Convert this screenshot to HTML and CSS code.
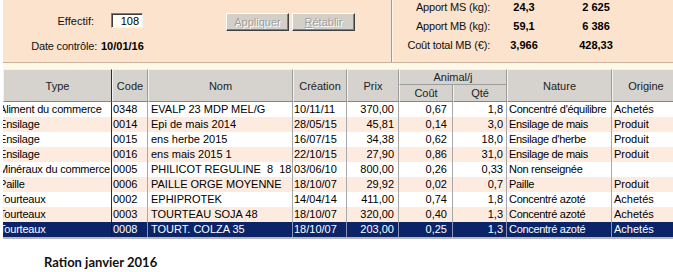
FILE: index.html
```html
<!DOCTYPE html>
<html lang="fr">
<head>
  <meta charset="UTF-8" />
  <title>Ration janvier 2016</title>
  <link rel="stylesheet" href="styles.css">
</head>
<body>

<div class="screen">
  <div class="panel">
    <div class="panel-left">
      <div class="field-row row-effectif">
        <label class="lbl lbl-eff" for="effectif">Effectif:</label>
        <input class="num-input" id="effectif" type="text" value="108" readonly />
        <button class="btn btn-first" disabled>Appliquer</button>
        <button class="btn" disabled><u>R</u>établir</button>
      </div>
      <div class="field-row row-date">
        <span class="lbl lbl-date">Date contrôle:</span>
        <strong>10/01/16</strong>
      </div>
    </div>
    <div class="panel-right">
      <div class="totals">
        <span class="t-lbl">Apport MS (kg):</span><b>24,3</b><b>2 625</b>
        <span class="t-lbl">Apport MB (kg):</span><b>59,1</b><b>6 386</b>
        <span class="t-lbl">Coût total MB (€):</span><b>3,966</b><b>428,33</b>
      </div>
    </div>
  </div>
  <div class="strip"></div>

  <div class="grid-wrap">
    <table class="grid">
      <colgroup>
        <col class="c-type"><col class="c-code"><col class="c-nom"><col class="c-crea">
        <col class="c-prix"><col class="c-cout"><col class="c-qte"><col class="c-nat"><col class="c-orig">
      </colgroup>
      <thead>
        <tr class="h1">
          <th rowspan="2" class="sep-dark">Type</th>
          <th rowspan="2">Code</th>
          <th rowspan="2">Nom</th>
          <th rowspan="2">Création</th>
          <th rowspan="2">Prix</th>
          <th colspan="2" class="group">Animal/j</th>
          <th rowspan="2">Nature</th>
          <th rowspan="2">Origine</th>
        </tr>
        <tr class="h2">
          <th>Coût</th>
          <th>Qté</th>
        </tr>
      </thead>
      <tbody>
        <tr>
          <td class="type sep-dark">Aliment du commerce</td><td class="code">0348</td><td class="nom">EVALP 23 MDP MEL/G</td><td class="crea">10/11/11</td>
          <td class="num prix">370,00</td><td class="num cout">0,67</td><td class="num qte">1,8</td><td class="nat">Concentré d'équilibre</td><td class="orig">Achetés</td>
        </tr>
        <tr>
          <td class="type sep-dark">Ensilage</td><td class="code">0014</td><td class="nom">Epi de mais 2014</td><td class="crea">28/05/15</td>
          <td class="num prix">45,81</td><td class="num cout">0,14</td><td class="num qte">3,0</td><td class="nat">Ensilage de mais</td><td class="orig">Produit</td>
        </tr>
        <tr>
          <td class="type sep-dark">Ensilage</td><td class="code">0015</td><td class="nom">ens herbe 2015</td><td class="crea">16/07/15</td>
          <td class="num prix">34,38</td><td class="num cout">0,62</td><td class="num qte">18,0</td><td class="nat">Ensilage d'herbe</td><td class="orig">Produit</td>
        </tr>
        <tr>
          <td class="type sep-dark">Ensilage</td><td class="code">0016</td><td class="nom">ens mais 2015 1</td><td class="crea">22/10/15</td>
          <td class="num prix">27,90</td><td class="num cout">0,86</td><td class="num qte">31,0</td><td class="nat">Ensilage de mais</td><td class="orig">Produit</td>
        </tr>
        <tr>
          <td class="type sep-dark">Minéraux du commerce</td><td class="code">0005</td><td class="nom">PHILICOT REGULINE  8  18  '</td><td class="crea">03/06/10</td>
          <td class="num prix">800,00</td><td class="num cout">0,26</td><td class="num qte">0,33</td><td class="nat">Non renseignée</td><td class="orig"></td>
        </tr>
        <tr>
          <td class="type sep-dark">Paille</td><td class="code">0006</td><td class="nom">PAILLE ORGE MOYENNE</td><td class="crea">18/10/07</td>
          <td class="num prix">29,92</td><td class="num cout">0,02</td><td class="num qte">0,7</td><td class="nat">Paille</td><td class="orig">Produit</td>
        </tr>
        <tr>
          <td class="type sep-dark">Tourteaux</td><td class="code">0002</td><td class="nom">EPHIPROTEK</td><td class="crea">14/04/14</td>
          <td class="num prix">411,00</td><td class="num cout">0,74</td><td class="num qte">1,8</td><td class="nat">Concentré azoté</td><td class="orig">Achetés</td>
        </tr>
        <tr>
          <td class="type sep-dark">Tourteaux</td><td class="code">0003</td><td class="nom">TOURTEAU SOJA 48</td><td class="crea">18/10/07</td>
          <td class="num prix">320,00</td><td class="num cout">0,40</td><td class="num qte">1,3</td><td class="nat">Concentré azoté</td><td class="orig">Achetés</td>
        </tr>
        <tr class="selected">
          <td class="type sep-dark">Tourteaux</td><td class="code">0008</td><td class="nom">TOURT. COLZA 35</td><td class="crea">18/10/07</td>
          <td class="num prix">203,00</td><td class="num cout">0,25</td><td class="num qte">1,3</td><td class="nat">Concentré azoté</td><td class="orig">Achetés</td>
        </tr>
      </tbody>
    </table>
  </div>

  <p class="caption">Ration janvier 2016</p>
</div>

</body>
</html>
```

FILE: styles.css
```css
* {
  box-sizing: border-box;
}

body {
  margin: 0;
  background: #ffffff;
  font-family: "Liberation Sans", Arial, sans-serif;
  font-size: 11px;
  color: #000;
}

.screen {
  padding-left: 3px;
}

/* top panel */
.panel {
  display: flex;
  height: 63px;
  background: #fce3cd;
  border-bottom: 1px solid #c8b29e;
  overflow: hidden;
}

.panel-left {
  width: 389px;
  border-right: 1px solid #a89888;
  box-shadow: 1px 0 0 #fff5ec;
}

.field-row {
  display: flex;
  align-items: center;
}

.row-effectif {
  padding-top: 13px;
  align-items: flex-start;
}

.lbl {
  text-align: right;
  color: #111;
}

.lbl-eff {
  width: 91px;
  margin-right: 17px;
  line-height: 16px;
}

.num-input {
  width: 32px;
  height: 15px;
  padding: 0 3px 0 0;
  border: 1px solid;
  border-color: #7d7d7d #f4f4f4 #f4f4f4 #7d7d7d;
  box-shadow: inset 1px 1px 0 #3c3c3c;
  background: #fffff4;
  font: inherit;
  text-align: right;
  color: #000;
}

.btn {
  width: 63px;
  height: 18px;
  padding: 0;
  background: #d4d0c8;
  border: 1px solid;
  border-color: #ffffff #404040 #404040 #ffffff;
  box-shadow: inset -1px -1px 0 #808080;
  font: inherit;
  color: #a0a0a0;
  text-shadow: 1px 1px 0 #ffffff;
}

.btn-first {
  margin-left: 83px;
}

.btn + .btn {
  margin-left: 3px;
}

.row-date {
  margin-top: 9px;
  line-height: 13px;
}

.lbl-date {
  width: 94px;
  margin-right: 4px;
  letter-spacing: -0.2px;
}

.totals {
  display: grid;
  grid-template-columns: 98px 68px 76px;
  grid-auto-rows: 19px;
  align-items: center;
  margin-top: -3px;
}

.t-lbl {
  text-align: right;
  color: #111;
  letter-spacing: -0.2px;
}

.totals b {
  text-align: center;
}

.strip {
  height: 6px;
  background: #fff8e9;
}

/* grid */
.grid-wrap {
  width: 670px;
  overflow: hidden;
}

.grid {
  width: 677px;
  table-layout: fixed;
  border-collapse: separate;
  border-spacing: 0;
  border-bottom: 2px solid #b8b8b8;
}

.c-type { width: 109px; }
.c-code { width: 36px; }
.c-nom { width: 145px; }
.c-crea { width: 54px; }
.c-prix { width: 52px; }
.c-cout { width: 54px; }
.c-qte { width: 54px; }
.c-nat { width: 105px; }
.c-orig { width: 68px; }

th {
  background: #d6d3ce;
  font-weight: normal;
  color: #222;
  border-right: 1px solid #9c9c9c;
  border-bottom: 1px solid #858585;
  border-left: 1px solid #f2f2f2;
  padding: 0;
  text-align: center;
}

.h1 th {
  height: 16px;
  border-top: 1px solid #f2f2f2;
}

.h1 th.group {
  line-height: 14px;
  vertical-align: top;
  border-bottom-color: #9c9c9c;
}

.h2 th {
  height: 17px;
}

td {
  height: 15px;
  line-height: 15px;
  padding: 0;
  white-space: pre;
  overflow: hidden;
  border-right: 1px solid #a8a8a8;
}

th.sep-dark,
td.sep-dark {
  border-right-color: #2c2c2c;
}

tbody tr:nth-child(even) td {
  background: #fdebdf;
}

.type {
  text-indent: -4px;
  letter-spacing: -0.2px;
}
.code { padding-left: 1px; }
.nom { padding-left: 3px; }
.crea { padding-left: 1px; }
.num { text-align: right; }
.prix { padding-right: 4px; }
.cout { padding-right: 5px; }
.qte { padding-right: 3px; }
.nat {
  padding-left: 2px;
  letter-spacing: -0.3px;
}
.orig { padding-left: 2px; }

tbody tr.selected td {
  background: #0b2468;
  color: #ffffff;
  border-right-color: #8794b8;
}

tbody tr.selected td.sep-dark {
  border-right-color: #1a1a1a;
}

.caption {
  margin: 15px 0 0 41px;
  font-family: Lato, "Open Sans", sans-serif;
  font-weight: bold;
  font-size: 13px;
  line-height: 16px;
  color: #111;
}
```
